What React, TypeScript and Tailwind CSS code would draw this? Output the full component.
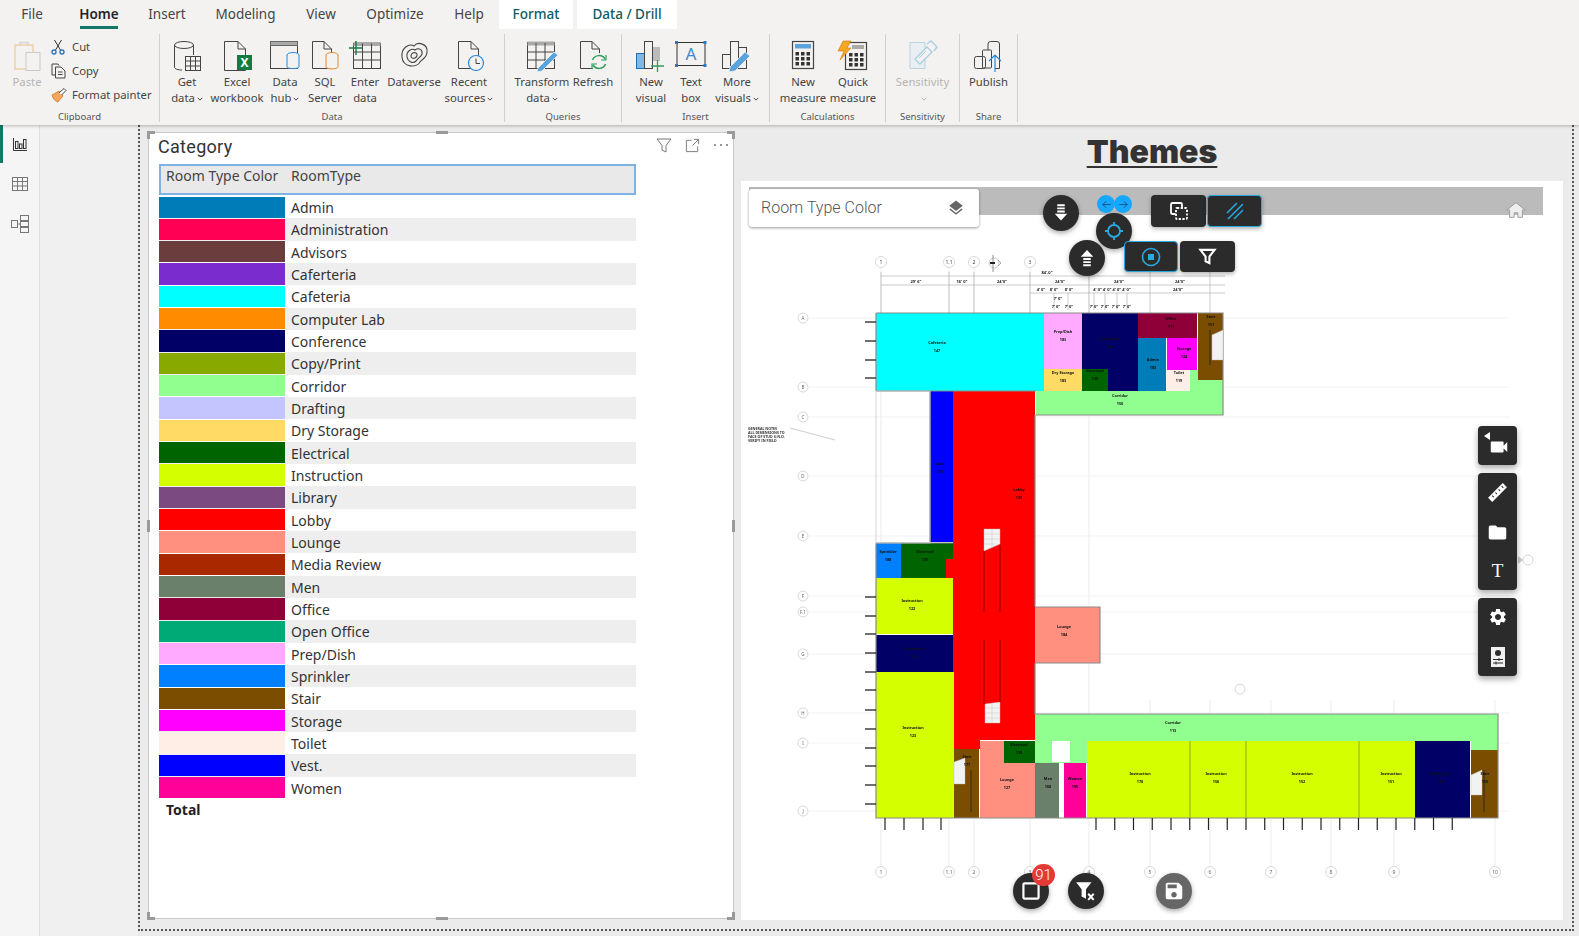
import type { ReactNode } from 'react'
import {
  MdFolder,
  MdLayers,
  MdSave,
  MdSettings,
  MdVideocam,
  MdCropSquare,
} from 'react-icons/md'

const ROOM_TYPES: [string, string][] = [
  ['Admin', '#007cb8'],
  ['Administration', '#ff0055'],
  ['Advisors', '#6b3d3d'],
  ['Caferteria', '#7b2ccf'],
  ['Cafeteria', '#00ffff'],
  ['Computer Lab', '#ff8c00'],
  ['Conference', '#000066'],
  ['Copy/Print', '#88aa00'],
  ['Corridor', '#90ff90'],
  ['Drafting', '#c4c4ff'],
  ['Dry Storage', '#ffdb66'],
  ['Electrical', '#006400'],
  ['Instruction', '#d4ff00'],
  ['Library', '#7a4a80'],
  ['Lobby', '#ff0000'],
  ['Lounge', '#ff9080'],
  ['Media Review', '#aa2800'],
  ['Men', '#6b806b'],
  ['Office', '#8f0038'],
  ['Open Office', '#00aa77'],
  ['Prep/Dish', '#ffaaff'],
  ['Sprinkler', '#0080ff'],
  ['Stair', '#7a4d00'],
  ['Storage', '#ff00ff'],
  ['Toilet', '#ffeee6'],
  ['Vest.', '#0000ff'],
  ['Women', '#ff0099'],
]

// room rectangles in screen pixels: x, y, w, h, fill
const ROOMS: [number, number, number, number, string][] = [
  [1036, 391, 187, 24, '#90ff90'],
  [1190, 370, 33, 21, '#90ff90'],
  [876, 313, 168, 78, '#00ffff'],
  [1044, 313, 38, 56, '#ffaaff'],
  [1044, 369, 38, 22, '#ffdb66'],
  [1082, 313, 56, 78, '#000066'],
  [1082, 369, 26, 22, '#006400'],
  [1138, 313, 59, 25, '#8f0038'],
  [1138, 338, 28, 53, '#007cb8'],
  [1167, 338, 30, 32, '#ff00ff'],
  [1167, 370, 23, 21, '#ffeee6'],
  [1198, 313, 25, 67, '#7a4d00'],
  [930, 391, 23, 151, '#0000ff'],
  [953, 391, 82, 349, '#ff0000'],
  [954, 740, 26, 9, '#ff0000'],
  [876, 543, 25, 35, '#0080ff'],
  [901, 543, 52, 35, '#006400'],
  [946, 559, 8, 19, '#ff0000'],
  [876, 578, 77, 56, '#d4ff00'],
  [876, 635, 77, 37, '#000066'],
  [876, 672, 78, 146, '#d4ff00'],
  [1035, 607, 65, 56, '#ff9080'],
  [1035, 714, 463, 27, '#90ff90'],
  [1471, 741, 27, 9, '#90ff90'],
  [1035, 741, 53, 22, '#90ff90'],
  [1052, 741, 18, 21, '#ffffff'],
  [954, 749, 25, 69, '#7a4d00'],
  [980, 741, 55, 77, '#ff9080'],
  [1004, 741, 31, 22, '#006400'],
  [1035, 763, 24, 55, '#6b806b'],
  [1064, 763, 22, 55, '#ff0099'],
  [1087, 741, 328, 77, '#d4ff00'],
  [1415, 741, 55, 77, '#000066'],
  [1471, 750, 27, 68, '#7a4d00'],
]

const LABELS: [number, number, string][] = [
  [937, 344, 'Cafeteria'],
  [1063, 333, 'Prep/Dish'],
  [1063, 374, 'Dry Storage'],
  [1110, 340, 'Conference'],
  [1095, 372, 'Electrical'],
  [1171, 320, 'Office'],
  [1153, 361, 'Admin'],
  [1184, 350, 'Storage'],
  [1179, 374, 'Toilet'],
  [1211, 318, 'Stair'],
  [1120, 397, 'Corridor'],
  [940, 465, 'Vest.'],
  [1019, 491, 'Lobby'],
  [888, 553, 'Sprinkler'],
  [925, 553, 'Electrical'],
  [912, 602, 'Instruction'],
  [914, 650, 'Conference'],
  [913, 729, 'Instruction'],
  [1064, 628, 'Lounge'],
  [1173, 724, 'Corridor'],
  [967, 758, 'Stair'],
  [1007, 781, 'Lounge'],
  [1019, 746, 'Electrical'],
  [1048, 780, 'Men'],
  [1075, 780, 'Women'],
  [1140, 775, 'Instruction'],
  [1216, 775, 'Instruction'],
  [1302, 775, 'Instruction'],
  [1391, 775, 'Instruction'],
  [1440, 775, 'Conference'],
  [1485, 775, 'Stair'],
]

const GRID_X = [881, 949, 974, 1030, 1089, 1150, 1210, 1271, 1331, 1394, 1495]
const GRID_NAMES = ['1', '1.1', '2', '3', '4', '5', '6', '7', '8', '9', '10']
const GRID_Y: [number, string][] = [
  [318, 'A'], [387, 'B'], [417, 'C'], [476, 'D'], [536, 'E'], [596, 'F'],
  [612, 'F.1'], [654, 'G'], [713, 'H'], [743, 'I'], [811, 'J'],
]
const LEFT_TICKS = [322, 341, 360, 378, 597, 616, 634, 653, 672, 690, 710, 729, 748, 766, 785, 804]
const BOTTOM_TICKS = [
  885, 904, 923, 941,
  ...Array.from({ length: 20 }, (_, i) => 1096 + i * 18.75),
]

function FloorPlan() {
  return (
    <svg viewBox="741 181 822 739" className="absolute inset-0 h-full w-full blur-[0.5px]">
      {/* grid */}
      {GRID_X.map((x, i) => (
        <g key={x}>
          <line x1={x} y1={i < 5 ? 268 : 700} x2={x} y2="866" stroke="#e4e4e4" strokeWidth="0.7" />
          <circle cx={x} cy="872" r="5.5" fill="#fff" stroke="#cfcfcf" strokeWidth="0.8" />
          <text x={x} y="874" fontSize="5" textAnchor="middle" fill="#666">{GRID_NAMES[i]}</text>
        </g>
      ))}
      {[881, 949, 974, 1030].map((x, i) => (
        <g key={x}>
          <circle cx={x} cy="262" r="5.5" fill="#fff" stroke="#cfcfcf" strokeWidth="0.8" />
          <text x={x} y="264" fontSize="5" textAnchor="middle" fill="#444">{['1', '1.1', '2', '3'][i]}</text>
        </g>
      ))}
      <circle cx="994" cy="263" r="5" fill="#fff" stroke="#bbb" strokeWidth="0.8" />
      <path d="M993 255V272" stroke="#666" strokeWidth="0.7" />
      <path d="M990 263H995" stroke="#222" strokeWidth="2" />
      <path d="M998 260L1001 263L998 266" stroke="#888" strokeWidth="0.7" fill="none" />
      {GRID_Y.map(([y, t]) => (
        <g key={y}>
          <line x1="809" y1={y} x2="1510" y2={y} stroke="#ececec" strokeWidth="0.7" />
          <circle cx="803" cy={y} r="5" fill="#fff" stroke="#cfcfcf" strokeWidth="0.8" />
          <text x="803" y={y + 2} fontSize="4.5" textAnchor="middle" fill="#666">{t}</text>
        </g>
      ))}
      {/* dimension strings */}
      <g stroke="#aaa" strokeWidth="0.6">
        <line x1="881" y1="276" x2="1225" y2="276" />
        <line x1="881" y1="285" x2="1225" y2="285" />
        <line x1="1030" y1="293" x2="1225" y2="293" />
        {[881, 949, 974, 1030, 1089, 1150, 1210].map((x) => (
          <line key={x} x1={x} y1="272" x2={x} y2="313" />
        ))}
        {[1054, 1068, 1094, 1105, 1117, 1127].map((x) => (
          <line key={x} x1={x} y1="293" x2={x} y2="310" />
        ))}
      </g>
      <g fontSize="4" fontWeight="700" fill="#222" textAnchor="middle">
        <text x="916" y="283">29' 6"</text>
        <text x="962" y="283">16' 0"</text>
        <text x="1002" y="283">24'0"</text>
        <text x="1060" y="283">24'0"</text>
        <text x="1119" y="283">24'0"</text>
        <text x="1180" y="283">24'0"</text>
        <text x="1041" y="291">4' 0"</text>
        <text x="1054" y="291">8' 0"</text>
        <text x="1069" y="291">8' 0"</text>
        <text x="1112" y="291">4' 0" 4' 0" 4' 0" 4' 0"</text>
        <text x="1178" y="291">24'0"</text>
        <text x="1047" y="274">84'-0"</text>
        <text x="1058" y="300">7' 0"</text>
        <text x="1056" y="308">7' 0"</text>
        <text x="1069" y="308">7' 0"</text>
        <text x="1094" y="308">7' 0"</text>
        <text x="1105" y="308">7' 0"</text>
        <text x="1116" y="308">7' 0"</text>
        <text x="1127" y="308">7' 0"</text>
      </g>
      {/* rooms */}
      {ROOMS.map(([x, y, w, h, fill]) => (
        <rect key={`${x}-${y}`} x={x} y={y} width={w} height={h} fill={fill} />
      ))}
      {/* outer walls */}
      <g stroke="#8a8a8a" strokeWidth="1.2" fill="none">
        <path d="M876 313H1223V415H1036M876 313V391M876 391H1036M930 391V542M1035 415V607M876 543H953M876 543V818H954M1035 607H1100V663H1035M1035 663V714H1498V818H876" />
        <path d="M1190 741V818M1246 741V818M1359 741V818" stroke="#9aa800" strokeWidth="1" />
      </g>
      <rect x="876" y="391" width="54" height="152" fill="none" stroke="#c9c9c9" strokeWidth="0.8" />
      {/* window ticks */}
      {LEFT_TICKS.map((y) => (
        <line key={y} x1="865" y1={y} x2="876" y2={y} stroke="#222" strokeWidth="1.3" />
      ))}
      {BOTTOM_TICKS.map((x) => (
        <line key={x} x1={x} y1="818" x2={x} y2="830" stroke="#222" strokeWidth="1.2" />
      ))}
      {/* stairs */}
      <g fill="#f2f2f2" stroke="#bbb" strokeWidth="0.4">
        <path d="M984 529H1000V544L984 551Z" />
        <path d="M985 704L1000 702V723H985Z" />
        <path d="M954 762L965 758V784H954Z" />
        <path d="M1212 335L1223 330V360H1212Z" />
        <path d="M1471 775L1482 770V795H1471Z" />
        <path d="M984 534H1000M984 539H1000M984 544H996M992 529V548M985 708H1000M985 713H1000M985 718H1000M992 703V723" fill="none" />
      </g>
      <g stroke="#7a0000" strokeWidth="0.8">
        <path d="M984 551V612M1000 545V612M984 640V704M1000 640V702" />
      </g>
      <path d="M971 770V812M1210 330V365M1484 770V812" stroke="#222" strokeWidth="0.8" />
      {/* room tags */}
      <g fontSize="3.8" fontWeight="700" fill="#111" textAnchor="middle">
        {LABELS.map(([x, y, t]) => (
          <g key={`${x}-${y}`}>
            <text x={x} y={y}>{t}</text>
            <text x={x} y={y + 8}>{'1'}{(x % 90) + 10}</text>
          </g>
        ))}
      </g>
      {/* general note */}
      <g fontSize="3.6" fontWeight="700" fill="#333">
        <text x="748" y="430">GENERAL NOTES</text>
        <text x="748" y="434">ALL DIMENSIONS TO</text>
        <text x="748" y="438">FACE OF STUD U.N.O.</text>
        <text x="748" y="442">VERIFY IN FIELD</text>
      </g>
      <path d="M790 428L835 440" stroke="#aaa" strokeWidth="0.6" />
      <circle cx="1240" cy="689" r="5" fill="#fff" stroke="#ccc" strokeWidth="0.8" />
      <circle cx="1528" cy="560" r="5" fill="#fff" stroke="#ccc" strokeWidth="0.8" />
      <path d="M1523 560L1518 556V564Z" fill="#ccc" />
    </svg>
  )
}

function Stroke({ children, vb = '0 0 32 32' }: { children: ReactNode; vb?: string }) {
  return (
    <svg viewBox={vb} className="h-[32px] w-[32px]" fill="none" stroke="#444" strokeWidth="1">
      {children}
    </svg>
  )
}

const ICONS: Record<string, ReactNode> = {
  getdata: (
    <Stroke>
      <ellipse cx="13" cy="5" rx="9.5" ry="3.5" />
      <path d="M3.5 5V27C3.5 29 7 30 11 30" />
      <path d="M22.5 5V15" />
      <rect x="14.5" y="16.5" width="15" height="14" fill="#f3f2f1" />
      <path d="M14.5 21H29.5M14.5 26H29.5M19.5 16.5V30.5M24.5 16.5V30.5" />
    </Stroke>
  ),
  excel: (
    <Stroke>
      <path d="M3.5 1.5H17L24.5 9V30.5H3.5Z" />
      <path d="M17 1.5V9H24.5" />
      <rect x="16" y="15" width="15" height="15" fill="#107c41" stroke="none" />
      <text x="23.5" y="27" fontSize="12" fontWeight="700" textAnchor="middle" fill="#fff" stroke="none">X</text>
    </Stroke>
  ),
  hub: (
    <Stroke>
      <rect x="1.5" y="1.5" width="27" height="27" fill="none" />
      <rect x="1.5" y="1.5" width="27" height="4" fill="#aaa" stroke="#666" />
      <ellipse cx="24" cy="15" rx="6" ry="2.5" fill="#f3f2f1" stroke="#2b88d8" />
      <path d="M18 15V27C18 29 30 29 30 27V15" fill="#f3f2f1" stroke="#2b88d8" />
    </Stroke>
  ),
  sql: (
    <Stroke>
      <path d="M3.5 1.5H15L22.5 9V28.5H3.5Z" />
      <path d="M15 1.5V9H22.5" />
      <ellipse cx="23" cy="15" rx="6" ry="2.5" fill="#f3f2f1" stroke="#e68a2e" />
      <path d="M17 15V27C17 29.5 29 29.5 29 27V15" fill="#f3f2f1" stroke="#e68a2e" />
    </Stroke>
  ),
  enter: (
    <Stroke>
      <rect x="4.5" y="3.5" width="27" height="25" />
      <rect x="4.5" y="2" width="27" height="4" fill="#aaa" stroke="none" />
      <path d="M4.5 12H31.5M4.5 20H31.5M13.5 3.5V28.5M22.5 3.5V28.5" />
      <path d="M0 8H13M7 1V15" stroke="#107c41" strokeWidth="1.4" />
    </Stroke>
  ),
  dataverse: (
    <Stroke>
      <path d="M4 17C3 8 11 3 16 6C20 1 30 4 29 12C29 18 24 19 22 22C19 28 5 28 4 17Z" strokeWidth="1.1" />
      <path d="M9 17C8 11 14 8 17 10C21 7 25 10 24 14C23 17 20 18 18 21C15 24 10 22 9 17Z" strokeWidth="1.1" />
      <path d="M13 16C13 13 16 12 18 13C20 14 19 17 17 18C15 19 13 18 13 16Z" strokeWidth="1.1" />
    </Stroke>
  ),
  recent: (
    <Stroke>
      <path d="M5.5 1.5H18L25.5 9V28.5H5.5Z" />
      <path d="M18 1.5V9H25.5" />
      <circle cx="23" cy="23" r="7.5" fill="#f3f2f1" stroke="#2b88d8" strokeWidth="1.2" />
      <path d="M23 18.5V23.5H27" stroke="#444" />
    </Stroke>
  ),
  transform: (
    <Stroke>
      <rect x="1.5" y="2.5" width="27" height="26" />
      <rect x="1.5" y="1.5" width="27" height="4" fill="#aaa" stroke="none" />
      <path d="M1.5 12H28.5M1.5 20H28.5M10 3V28.5M19 3V28.5" />
      <path d="M12 28L28 12L32 15L16 31L11 32Z" fill="#5ba3dc" stroke="#f3f2f1" strokeWidth="0.8" />
    </Stroke>
  ),
  refresh: (
    <Stroke>
      <path d="M3.5 1.5H15L22.5 9V28.5H3.5Z" />
      <path d="M15 1.5V9H22.5" />
      <g fill="#f3f2f1" stroke="none"><circle cx="22" cy="22" r="9" /></g>
      <path d="M15.5 20A7 7 0 0 1 28 19M28.5 24A7 7 0 0 1 16 25" stroke="#2e9e5b" strokeWidth="1.5" />
      <path d="M29 15V20H24M15 29V24H20" stroke="#2e9e5b" strokeWidth="1.2" />
    </Stroke>
  ),
  newvisual: (
    <Stroke>
      <rect x="1.5" y="13.5" width="8" height="15" fill="#7fb8e6" stroke="#1f6fb5" />
      <rect x="9.5" y="1.5" width="8" height="27" />
      <rect x="18" y="7" width="7" height="14" fill="#bbb" stroke="none" />
      <path d="M22.5 20V32M16 26H29" stroke="#2e9e5b" strokeWidth="1.3" />
    </Stroke>
  ),
  textbox: (
    <Stroke>
      <rect x="2" y="2.5" width="28" height="23" stroke="#333" />
      <g fill="#2b78c2" stroke="none">
        <rect x="0" y="1" width="3" height="3" /><rect x="28.5" y="1" width="3" height="3" />
        <rect x="0" y="24" width="3" height="3" /><rect x="28.5" y="24" width="3" height="3" />
      </g>
      <text x="16" y="20" fontSize="17" textAnchor="middle" fill="#3c8ad0" stroke="none">A</text>
    </Stroke>
  ),
  morevisuals: (
    <Stroke>
      <rect x="1.5" y="14.5" width="8" height="14" />
      <rect x="9.5" y="1.5" width="8" height="27" />
      <rect x="17.5" y="7.5" width="8" height="21" />
      <path d="M9 27L24 12L29 16L14 31L8 32Z" fill="#5ba3dc" stroke="#f3f2f1" strokeWidth="0.8" />
    </Stroke>
  ),
  measure: (
    <Stroke>
      <rect x="5.5" y="1.5" width="21" height="27" strokeWidth="1.2" />
      <rect x="8" y="4" width="16" height="4.5" fill="#5ba3dc" stroke="none" />
      <g fill="#333" stroke="none">
        {[12, 17, 22].map((y) => [8.5, 14, 19.5].map((x) => <rect key={`${x}${y}`} x={x} y={y} width="3.5" height="3.5" />))}
      </g>
    </Stroke>
  ),
  quick: (
    <Stroke>
      <rect x="8.5" y="2.5" width="21" height="27" strokeWidth="1.2" />
      <rect x="15" y="5" width="12" height="4" fill="#aaa" stroke="none" />
      <g fill="#333" stroke="none">
        {[13, 18, 23].map((y) => [12, 17.5, 23].map((x) => <rect key={`${x}${y}`} x={x} y={y} width="3.5" height="3.5" />))}
      </g>
      <path d="M6 1H14L10 8H14L3 20L7 11H1Z" fill="#f5a623" stroke="#c87a10" strokeWidth="0.6" />
    </Stroke>
  ),
  sensitivity: (
    <Stroke>
      <path d="M3 2.5H18V28.5H3Z" fill="#e8eef2" stroke="#bcd2de" />
      <path d="M8 19L20 7L25 12L13 24Z" fill="#f3f2f1" stroke="#a9cfe4" strokeWidth="1.4" />
      <path d="M20 4L24 1L30 7L27 11" fill="none" stroke="#a9cfe4" strokeWidth="1.4" />
      <path d="M12 18L19 11" stroke="#a9cfe4" />
    </Stroke>
  ),
  publish: (
    <Stroke>
      <rect x="1.5" y="16.5" width="11" height="12" rx="2" />
      <rect x="9.5" y="10" width="9" height="18" rx="1" />
      <path d="M15 10V4A2.5 2.5 0 0 1 17.500 1.500H24A2.500 2.500 0 0 1 26.500 4V28.500H22" />
      <path d="M22 32V15M16 21L22 15L28 21" stroke="#2b88d8" strokeWidth="1.2" />
    </Stroke>
  ),
}

function Chevron() {
  return (
    <svg viewBox="0 0 8 8" className="ml-[2px] inline-block h-[6px] w-[6px]" fill="none" stroke="currentColor" strokeWidth="1.3">
      <path d="M1 2.500L4 5.500L7 2.500" />
    </svg>
  )
}

function RibbonButton({
  icon,
  lines,
  className,
  caret,
  muted,
}: {
  icon: string
  lines: string[]
  className: string
  caret?: boolean
  muted?: boolean
}) {
  return (
    <div className={`flex flex-col items-center ${className}`}>
      <div className="flex h-[32px] w-[32px] items-center justify-center">{ICONS[icon]}</div>
      <div className={`mt-[2px] flex flex-col items-center whitespace-nowrap text-[11.300px] leading-[16px] ${muted ? 'text-[#b5b5b5]' : 'text-[#444]'}`}>
        {lines.map((line, i) => (
          <span key={line} className="h-[16px]">
            {line}
            {caret && i === lines.length - 1 && <Chevron />}
          </span>
        ))}
      </div>
    </div>
  )
}

function RibbonGroup({
  label,
  className,
  pad = '',
  children,
}: {
  label: string
  className: string
  pad?: string
  children: ReactNode
}) {
  return (
    <div className={`flex h-[88px] flex-col border-r border-[#d0d0d0] ${className}`}>
      <div className={`flex flex-1 items-start pt-[6px] ${pad}`}>{children}</div>
      <div className="text-center text-[9.500px] leading-[10px] text-[#555]">{label}</div>
    </div>
  )
}

function Ribbon() {
  const tabs: [string, string][] = [
    ['File', 'w-[32px] ml-[16px]'],
    ['Home', 'w-[38px] ml-[32px]'],
    ['Insert', 'w-[34px] ml-[32px]'],
    ['Modeling', 'w-[59px] ml-[32px]'],
    ['View', 'w-[30px] ml-[31px]'],
    ['Optimize', 'w-[56px] ml-[31px]'],
    ['Help', 'w-[28px] ml-[32px]'],
  ]
  return (
    <div className="relative z-10 h-[125px] bg-[#f3f2f1] shadow-[0_1px_3px_rgba(0,0,0,0.25)]">
      <div className="flex h-[29px] items-stretch text-[13.500px]">
        {tabs.map(([name, cls]) => (
          <div
            key={name}
            className={`flex shrink-0 items-center justify-center whitespace-nowrap ${cls} ${
              name === 'Home' ? 'border-b-[3px] border-[#117865] pt-[3px] font-semibold text-[#252423]' : 'text-[#444]'
            }`}
          >
            {name}
          </div>
        ))}
        <div className="ml-[16px] flex w-[74px] items-center justify-center bg-white font-medium text-[#0f5a64]">Format</div>
        <div className="ml-[4px] flex w-[100px] items-center justify-center bg-white font-medium text-[#0f5a64]">Data / Drill</div>
        <div className="w-[20px] bg-[#f3f2f1]" />
      </div>
      <div className="mt-[5px] flex">
        <RibbonGroup label="Clipboard" className="w-[160px]">
          <div className="ml-[10px] flex w-[34px] flex-col items-center">
            <svg viewBox="0 0 32 32" className="h-[32px] w-[32px]" fill="none">
              <path d="M4 5H22V29H4Z" stroke="#f0cfa8" strokeWidth="1.500" />
              <path d="M9 5V2.500H17V5" stroke="#d8d8d8" strokeWidth="1.500" />
              <rect x="15" y="12.500" width="14" height="18" fill="#f3f2f1" stroke="#c9c9c9" />
            </svg>
            <div className="mt-[2px] text-[11.300px] leading-[16px] text-[#b5b5b5]">Paste</div>
          </div>
          <div className="-mt-[5px] ml-[7px] flex flex-col text-[11.300px] leading-[24px] text-[#444]">
            <div className="flex h-[24px] items-center gap-[6px]">
              <svg viewBox="0 0 14 16" className="h-[16px] w-[14px]" fill="none" stroke="#333" strokeWidth="1">
                <path d="M3.500 1L9.500 11M10.500 1L4.500 11" />
                <circle cx="3" cy="13" r="2" stroke="#2b78c2" strokeWidth="1.400" />
                <circle cx="11" cy="13" r="2" stroke="#2b78c2" strokeWidth="1.400" />
              </svg>
              <span className="ml-[1px]">Cut</span>
            </div>
            <div className="flex h-[24px] items-center gap-[6px]">
              <svg viewBox="0 0 15 16" className="h-[16px] w-[15px]" fill="none" stroke="#444" strokeWidth="1">
                <path d="M4 12H1V1H7L8 2.500" />
                <path d="M4.500 4H10L14 8V15H4.500Z" fill="#f3f2f1" />
                <path d="M7 9H11.500M7 11.500H11.500" />
              </svg>
              <span>Copy</span>
            </div>
            <div className="flex h-[24px] items-center gap-[5px]">
              <svg viewBox="0 0 16 16" className="h-[16px] w-[16px]" fill="none">
                <path d="M1 8L8 4L12 9L7 15C4 14 2 12 1 8Z" fill="#f2a65a" stroke="#c8742a" strokeWidth="0.700" />
                <path d="M8 6L13 1.500L15 3.500L10.500 8" fill="#fff" stroke="#444" />
              </svg>
              <span className="whitespace-nowrap">Format painter</span>
            </div>
          </div>
        </RibbonGroup>
        <RibbonGroup label="Data" className="w-[345px]" pad="pl-[10px]">
          <RibbonButton icon="getdata" lines={['Get', 'data']} caret className="w-[34px]" />
          <RibbonButton icon="excel" lines={['Excel', 'workbook']} className="w-[66px]" />
          <RibbonButton icon="hub" lines={['Data', 'hub']} caret className="w-[30px]" />
          <RibbonButton icon="sql" lines={['SQL', 'Server']} className="w-[50px]" />
          <RibbonButton icon="enter" lines={['Enter', 'data']} className="w-[30px]" />
          <RibbonButton icon="dataverse" lines={['Dataverse']} className="w-[68px]" />
          <RibbonButton icon="recent" lines={['Recent', 'sources']} caret className="w-[42px]" />
        </RibbonGroup>
        <RibbonGroup label="Queries" className="w-[117px]" pad="pl-[7px]">
          <RibbonButton icon="transform" lines={['Transform', 'data']} caret className="w-[60px]" />
          <RibbonButton icon="refresh" lines={['Refresh']} className="w-[42px]" />
        </RibbonGroup>
        <RibbonGroup label="Insert" className="w-[148px]" pad="pl-[9px]">
          <RibbonButton icon="newvisual" lines={['New', 'visual']} className="w-[40px]" />
          <RibbonButton icon="textbox" lines={['Text', 'box']} className="w-[40px]" />
          <RibbonButton icon="morevisuals" lines={['More', 'visuals']} caret className="w-[52px]" />
        </RibbonGroup>
        <RibbonGroup label="Calculations" className="w-[116px]" pad="pl-[8px]">
          <RibbonButton icon="measure" lines={['New', 'measure']} className="w-[50px]" />
          <RibbonButton icon="quick" lines={['Quick', 'measure']} className="w-[50px]" />
        </RibbonGroup>
        <RibbonGroup label="Sensitivity" className="w-[74px]">
          <RibbonButton icon="sensitivity" lines={['Sensitivity', '']} caret muted className="w-[74px]" />
        </RibbonGroup>
        <RibbonGroup label="Share" className="w-[58px]">
          <RibbonButton icon="publish" lines={['Publish']} className="w-[58px]" />
        </RibbonGroup>
      </div>
    </div>
  )
}

function LeftRail() {
  return (
    <div className="flex w-[40px] shrink-0 flex-col border-r border-[#e1dfdd] bg-[#f5f5f5]">
      <div className="flex h-[38px] items-center justify-center border-l-[3px] border-[#117865] pr-[3px]">
        <svg viewBox="0 0 16 16" className="h-[16px] w-[16px]" fill="none" stroke="#333" strokeWidth="1">
          <path d="M1.500 2V14.500H15" />
          <rect x="3.500" y="5.500" width="2.500" height="7" />
          <rect x="7.500" y="8" width="2.500" height="4.500" />
          <rect x="11.500" y="3.500" width="2.500" height="9" />
        </svg>
      </div>
      <div className="flex h-[42px] items-center justify-center">
        <svg viewBox="0 0 16 16" className="h-[16px] w-[16px]" fill="none" stroke="#777" strokeWidth="1">
          <rect x="0.500" y="1.500" width="15" height="13" />
          <path d="M0.500 5.500H15.500M0.500 10H15.500M5.500 1.500V14.500M10.500 1.500V14.500" />
        </svg>
      </div>
      <div className="flex h-[38px] items-center justify-center">
        <svg viewBox="0 0 18 18" className="h-[18px] w-[18px]" fill="none" stroke="#777" strokeWidth="1">
          <rect x="0.500" y="5.500" width="6" height="7" />
          <rect x="9.500" y="0.500" width="8" height="5" />
          <rect x="9.500" y="6.500" width="8" height="5" />
          <rect x="9.500" y="12.500" width="8" height="5" />
          <path d="M6.500 9H9.500" />
        </svg>
      </div>
    </div>
  )
}

function Corner({ className }: { className: string }) {
  return <div className={`absolute h-[8px] w-[8px] border-[#9a9a9a] ${className}`} />
}

function TableVisual() {
  return (
    <div className="relative h-[787px] w-[586px] shrink-0 border border-[#c8c8c8] bg-white">
      <Corner className="-left-[2px] -top-[2px] border-l-[3px] border-t-[3px]" />
      <Corner className="-right-[2px] -top-[2px] border-r-[3px] border-t-[3px]" />
      <Corner className="-left-[2px] -bottom-[2px] border-b-[3px] border-l-[3px]" />
      <Corner className="-right-[2px] -bottom-[2px] border-b-[3px] border-r-[3px]" />
      <div className="absolute -top-[2px] left-[287px] h-[3px] w-[12px] bg-[#9a9a9a]" />
      <div className="absolute -bottom-[2px] left-[287px] h-[3px] w-[12px] bg-[#9a9a9a]" />
      <div className="absolute -left-[2px] top-[387px] h-[12px] w-[3px] bg-[#9a9a9a]" />
      <div className="absolute -right-[2px] top-[387px] h-[12px] w-[3px] bg-[#9a9a9a]" />

      <div className="absolute right-[4px] top-[4px] flex items-center gap-[13px] text-[#777]">
        <svg viewBox="0 0 16 16" className="ml-[1px] h-[16px] w-[16px]" fill="none" stroke="currentColor" strokeWidth="1">
          <path d="M1 2H15L10 8.500V15L6 13V8.500Z" />
        </svg>
        <svg viewBox="0 0 16 16" className="h-[15px] w-[15px]" fill="none" stroke="currentColor" strokeWidth="1">
          <path d="M7 2.500H1.500V14.500H13.500V9M9.500 1.500H14.500V6.500M14.500 1.500L8 8" />
        </svg>
        <svg viewBox="0 0 16 4" className="h-[4px] w-[16px]" fill="currentColor">
          <circle cx="2" cy="2" r="1" /><circle cx="8" cy="2" r="1" /><circle cx="14" cy="2" r="1" />
        </svg>
      </div>

      <div className="pl-[9px] pt-[2px] font-['Roboto',sans-serif] text-[18px] leading-[24px] tracking-[0.3px] text-[#333]">Category</div>

      <div className="ml-[10px] mt-[5px] w-[477px]">
        <div className="flex h-[31px] border-2 border-[#7fb3e6] bg-[#e9e9e9] text-[14px] leading-[20px] text-[#444]">
          <div className="w-[124px] pl-[5px] whitespace-nowrap">Room Type Color</div>
          <div className="pl-[6px]">RoomType</div>
        </div>
        <div className="mt-[1px]">
          {ROOM_TYPES.map(([name, color], i) => (
            <div key={name} className={`flex h-[22.340px] items-center text-[14px] text-[#333] ${i % 2 ? 'bg-[#eeeeee]' : 'bg-white'}`}>
              {/* swatch colour comes from the data */}
              <div className="h-[21.340px] w-[126px] shrink-0" style={{ backgroundColor: color }} />
              <div className="pl-[6px] pt-[1px]">{name}</div>
            </div>
          ))}
        </div>
        <div className="pl-[7px] pt-[1px] text-[14px] font-bold leading-[20px] text-[#222]">Total</div>
      </div>
    </div>
  )
}

function RoundButton({ className, children }: { className: string; children: ReactNode }) {
  return (
    <div className={`absolute flex h-[36px] w-[36px] items-center justify-center rounded-full text-white shadow-[0_2px_5px_rgba(0,0,0,0.35)] ${className}`}>
      {children}
    </div>
  )
}

function RectButton({ className, children }: { className: string; children: ReactNode }) {
  return (
    <div className={`absolute flex items-center justify-center rounded-[4px] bg-[#2b2b2b] text-white shadow-[0_2px_4px_rgba(0,0,0,0.3)] ${className}`}>
      {children}
    </div>
  )
}

function ViewerPanel() {
  return (
    <div className="relative h-[739px] w-[822px] bg-white">
      <FloorPlan />
      <div className="absolute left-[8px] top-[6px] h-[28px] w-[794px] bg-[#bbbbbb]" />
      <div className="absolute left-[8px] top-[8px] flex h-[38px] w-[230px] items-center justify-between rounded-[3px] bg-white pl-[12px] pr-[14px] font-['Roboto',sans-serif] text-[16px] font-light text-[#555] shadow-[0_1px_3px_rgba(0,0,0,0.4)]">
        <span>Room Type Color</span>
        <MdLayers className="h-[18px] w-[18px] text-[#666]" />
      </div>

      <svg viewBox="0 0 24 24" className="absolute left-[764px] top-[18px] h-[22px] w-[22px]" fill="#eeeeee" stroke="#999" strokeWidth="1">
        <path d="M2 12L12 4L22 12H19V20H14V15H10V20H5V12Z" />
      </svg>

      <RoundButton className="left-[302px] top-[14px] bg-[#2b2b2b]">
        <svg viewBox="0 0 16 16" className="h-[20px] w-[20px]" fill="#fff">
          <path d="M5 1H11V2.500H5ZM5 3.500H11V5H5ZM5 6H11V7.500H5ZM3 8.500H13L8 14Z" />
        </svg>
      </RoundButton>
      <div className="absolute left-[356px] top-[14px] flex h-[18px] w-[18px] items-center justify-center rounded-full bg-[#16a8ff]">
        <svg viewBox="0 0 12 12" className="h-[11px] w-[11px]" fill="none" stroke="#1b4f72" strokeWidth="1"><path d="M10.500 6H2M5.500 2.500L2 6L5.500 9.500" /></svg>
      </div>
      <div className="absolute left-[373px] top-[14px] flex h-[18px] w-[18px] items-center justify-center rounded-full bg-[#16a8ff]">
        <svg viewBox="0 0 12 12" className="h-[11px] w-[11px]" fill="none" stroke="#1b4f72" strokeWidth="1"><path d="M1.500 6H10M6.500 2.500L10 6L6.500 9.500" /></svg>
      </div>
      <RoundButton className="left-[355px] top-[32px] bg-[#2b2b2b]">
        <svg viewBox="0 0 20 20" className="h-[20px] w-[20px]" fill="none" stroke="#27a9e1" strokeWidth="1.800">
          <circle cx="10" cy="10" r="6" />
          <path d="M10 1V4M10 16V19M1 10H4M16 10H19" />
        </svg>
      </RoundButton>
      <RoundButton className="left-[328px] top-[59px] bg-[#2b2b2b]">
        <svg viewBox="0 0 16 16" className="h-[20px] w-[20px]" fill="#fff">
          <path d="M8 1.500L13 7H3ZM5 8H11V9.500H5ZM5 10.500H11V12H5ZM5 13H11V14.500H5Z" />
        </svg>
      </RoundButton>

      <RectButton className="left-[410px] top-[14px] h-[32px] w-[55px]">
        <svg viewBox="0 0 20 20" className="h-[20px] w-[20px]" fill="none" stroke="#fff" strokeWidth="1.800">
          <path d="M6.500 13H3.500A1.500 1.500 0 0 1 2 11.500V3.500A1.500 1.500 0 0 1 3.500 2H11.500A1.500 1.500 0 0 1 13 3.500V6.500" />
          <rect x="7" y="7" width="11" height="11" rx="1" strokeDasharray="2.200 1.500" />
        </svg>
      </RectButton>
      <RectButton className="left-[466px] top-[14px] h-[32px] w-[55px] border border-[#27a9e1]">
        <svg viewBox="0 0 20 20" className="h-[20px] w-[20px]" fill="none" stroke="#27a9e1" strokeWidth="1.500">
          <path d="M2 12L12 2M3 18L18 3M9 18L18 9" />
        </svg>
      </RectButton>
      <RectButton className="left-[383px] top-[60px] h-[31px] w-[54px] border border-[#27a9e1]">
        <svg viewBox="0 0 20 20" className="h-[20px] w-[20px]" fill="none" stroke="#27a9e1" strokeWidth="1.600">
          <circle cx="10" cy="10" r="8.500" />
          <rect x="7" y="7" width="6" height="6" fill="#27a9e1" stroke="none" />
        </svg>
      </RectButton>
      <RectButton className="left-[439px] top-[60px] h-[31px] w-[55px]">
        <svg viewBox="0 0 20 20" className="h-[19px] w-[19px]" fill="none" stroke="#fff" strokeWidth="2.200">
          <path d="M2.500 3H17.500L12 10V17L8 15V10Z" />
        </svg>
      </RectButton>

      {/* tool column */}
      <div className="absolute left-[737px] top-[245px] flex w-[39px] flex-col gap-[8px] text-white">
        <div className="relative flex h-[39px] items-center justify-center rounded-[4px] bg-[#2b2b2b] shadow-[0_3px_6px_rgba(0,0,0,0.35)]">
          <MdVideocam className="ml-[3px] mt-[3px] h-[22px] w-[22px]" />
          <div className="absolute left-[6px] top-[6px] h-0 w-0 border-y-[4px] border-r-[6px] border-y-transparent border-r-white" />
        </div>
        <div className="flex h-[117px] flex-col items-center justify-between rounded-[4px] bg-[#2b2b2b] py-[9px] shadow-[0_3px_6px_rgba(0,0,0,0.35)]">
          <svg viewBox="0 0 20 20" className="h-[21px] w-[21px]" fill="#fff">
            <path d="M1 15L15 1L19 5L5 19Z" />
            <path d="M5 13L6.500 14.500M8 10L9.500 11.500M11 7L12.500 8.500M14 4L15.500 5.500" stroke="#2b2b2b" strokeWidth="1" />
          </svg>
          <MdFolder className="h-[21px] w-[21px]" />
          <div className="font-['Liberation_Serif',serif] text-[19px] leading-[20px]">T</div>
        </div>
        <div className="flex h-[78px] flex-col items-center justify-between rounded-[4px] bg-[#2b2b2b] py-[9px] shadow-[0_3px_6px_rgba(0,0,0,0.35)]">
          <MdSettings className="h-[20px] w-[20px]" />
          <svg viewBox="0 0 14 20" className="h-[20px] w-[14px]">
            <rect width="14" height="20" fill="#f0f0f0" />
            <circle cx="7" cy="6" r="3" fill="#2b2b2b" />
            <path d="M2 12.500H12M2 16H12" stroke="#2b2b2b" strokeWidth="1" />
            <path d="M8 11V14M5 14.500V17.500" stroke="#2b2b2b" strokeWidth="1" />
          </svg>
        </div>
      </div>

      {/* bottom actions */}
      <RoundButton className="left-[272px] top-[692px] bg-[#2b2b2b]">
        <MdCropSquare className="h-[26px] w-[26px]" />
      </RoundButton>
      <div className="absolute left-[291px] top-[683px] flex h-[22px] w-[23px] items-center justify-center rounded-full bg-[#e53935] font-['Roboto',sans-serif] text-[15px] font-light text-white">91</div>
      <RoundButton className="left-[327px] top-[692px] bg-[#2b2b2b]">
        <svg viewBox="0 0 20 20" className="h-[22px] w-[22px]" fill="#fff">
          <path d="M1 2H15L10 8.500V17L6 15V8.500Z" />
          <path d="M12 12.500L17 18M17 12.500L12 18" stroke="#fff" strokeWidth="1.800" />
        </svg>
      </RoundButton>
      <RoundButton className="left-[415px] top-[692px] bg-[#666666]">
        <MdSave className="h-[22px] w-[22px]" />
      </RoundButton>
    </div>
  )
}

export default function App() {
  return (
    <div className="flex h-[936px] w-full flex-col overflow-hidden bg-[#ebebeb] font-['Noto_Sans',sans-serif]">
      <Ribbon />
      <div className="flex flex-1">
        <LeftRail />
        <div className="w-[98px] shrink-0 bg-[#f0f0f0]" />
        <div className="mb-[5px] flex w-[1436px] shrink-0 gap-[7px] border-x-2 border-b-2 border-dotted border-[#555] bg-[#ebebeb] pl-[8px] pt-[7px]">
          <TableVisual />
          <div className="flex flex-col">
            <div className="flex h-[49px] items-center justify-center pb-[9px] font-['Inter',sans-serif] text-[32px] font-black leading-[36px] text-[#333] underline decoration-[2px] underline-offset-[3px]">Themes</div>
            <ViewerPanel />
          </div>
        </div>
      </div>
    </div>
  )
}
